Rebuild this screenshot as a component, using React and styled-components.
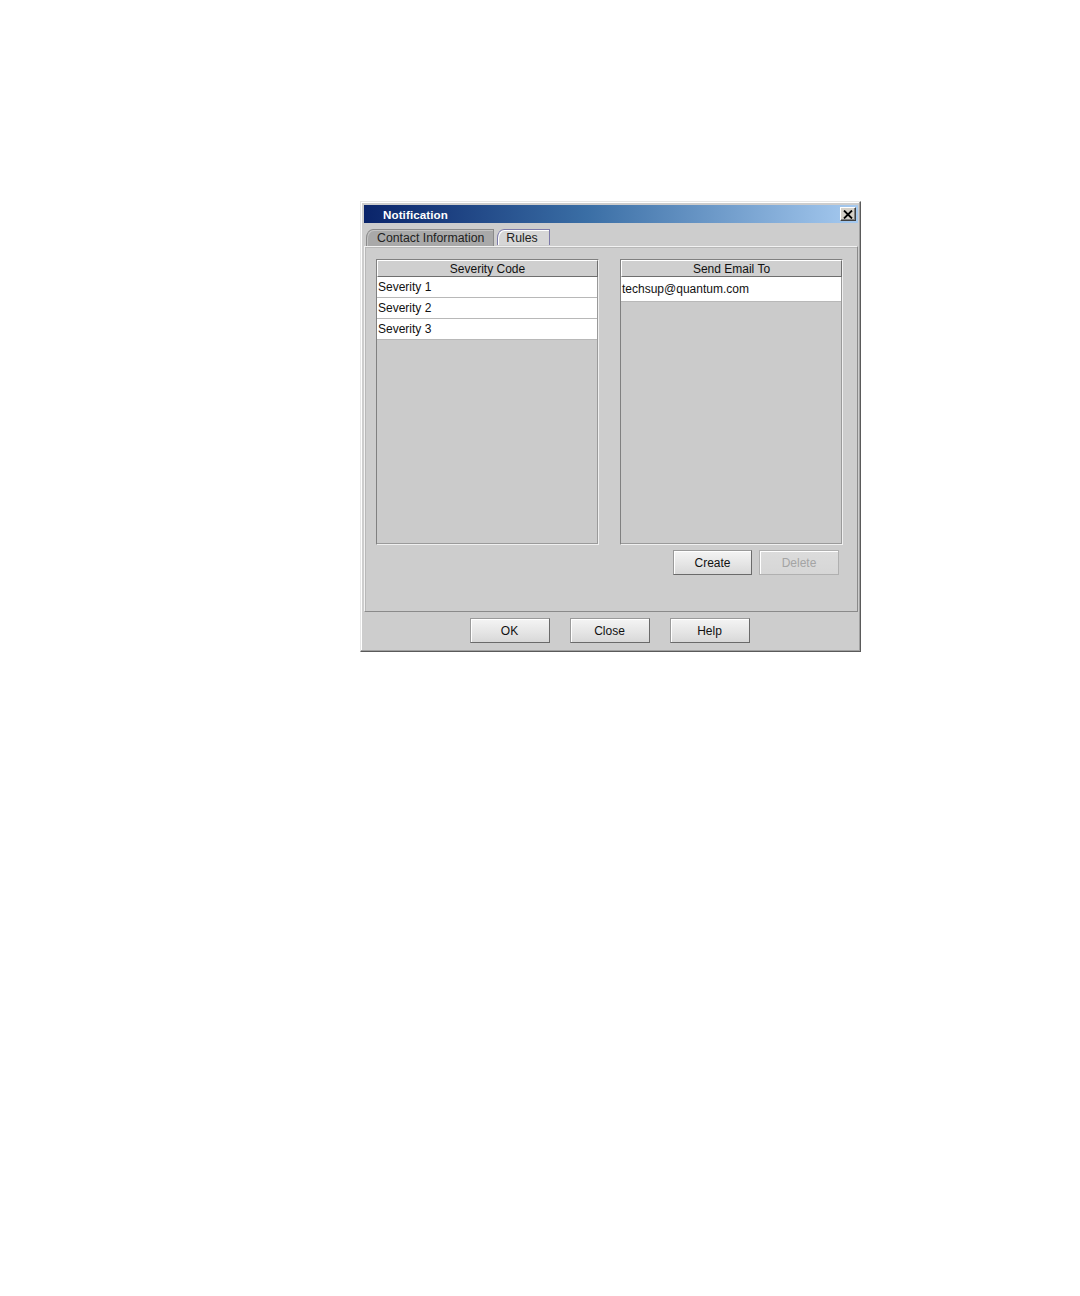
import styled, { createGlobalStyle } from "styled-components";

const GlobalStyle = createGlobalStyle`
  html, body {
    margin: 0;
    background: #ffffff;
  }
  body {
    font-family: "Liberation Sans", Arial, sans-serif;
    font-size: 12px;
    color: #000;
  }
`;

const Page = styled.div`
  width: 1080px;
  height: 1296px;
  padding: 201px 0 0 360px;
  box-sizing: border-box;
`;

const Window = styled.div`
  width: 501px;
  height: 451px;
  box-sizing: border-box;
  background: #cdcdcd;
  border: 1px solid;
  border-color: #e6e6e6 #5a5a5a #5a5a5a #e6e6e6;
  box-shadow: inset -1px -1px 0 #a0a0a0, inset 1px 1px 0 #ffffff;
  padding: 3px 2px 0 3px;
  display: flex;
  flex-direction: column;
`;

const TitleBar = styled.div`
  height: 18px;
  display: flex;
  align-items: center;
  justify-content: space-between;
  padding: 0 2px 0 19px;
  background: linear-gradient(to right, #0a246a 0%, #3a6ea5 45%, #a6caf0 100%);
`;

const Title = styled.span`
  color: #ffffff;
  font-weight: bold;
  font-size: 11.6px;
  letter-spacing: 0.1px;
`;

const CloseBox = styled.button`
  width: 16px;
  height: 14px;
  padding: 0;
  display: flex;
  align-items: center;
  justify-content: center;
  background: #d4d0c8;
  border: 1px solid;
  border-color: #ffffff #404040 #404040 #ffffff;
  box-shadow: inset -1px -1px 0 #808080;
`;

const TabStrip = styled.div`
  display: flex;
  align-items: flex-end;
  gap: 3px;
  height: 23px;
  padding-left: 2px;
`;

const Tab = styled.div`
  height: ${(p) => (p.selected ? "16px" : "17px")};
  box-sizing: border-box;
  padding: 0 ${(p) => (p.selected ? "11px" : "9px")} 0 ${(p) => (p.selected ? "8px" : "10px")};
  margin-bottom: ${(p) => (p.selected ? "1px" : "0")};
  display: flex;
  align-items: center;
  font-size: 12.3px;
  color: #222;
  background: ${(p) => (p.selected ? "#d6d6d6" : "#a9a9a9")};
  border: 1px solid ${(p) => (p.selected ? "#7c7aa8" : "#8a8a8a")};
  border-bottom: none;
  border-top-left-radius: 7px 9px;
  box-shadow: inset 1px 1px 0 ${(p) => (p.selected ? "#ffffff" : "#c4c4c4")};
`;

const Panel = styled.div`
  width: 494px;
  height: 366px;
  box-sizing: border-box;
  border: 1px solid;
  border-color: #f2f2f2 #8a8a8a #8a8a8a #f2f2f2;
  box-shadow: inset 1px 1px 0 #b8b8b8;
  padding: 12px 14px 0 11px;
  display: flex;
  flex-direction: column;
`;

const Tables = styled.div`
  display: flex;
  gap: 21px;
`;

const Table = styled.div`
  width: 223px;
  height: 286px;
  box-sizing: border-box;
  border: 1px solid;
  border-color: #808080 #f0f0f0 #f0f0f0 #808080;
  box-shadow: inset -1px -1px 0 #9a9a9a;
  background: #cbcbcb;
  display: flex;
  flex-direction: column;
`;

const HeaderCell = styled.div`
  height: 17px;
  box-sizing: border-box;
  background: #cfcfcf;
  border: 1px solid;
  border-color: #ffffff #6e6e6e #6e6e6e #ffffff;
  text-align: center;
  line-height: 17px;
  font-size: 12px;
  color: #111;
`;

const Row = styled.div`
  height: ${(p) => p.h}px;
  box-sizing: border-box;
  background: #ffffff;
  border-bottom: 1px solid #b8b8b8;
  margin-right: 1px;
  padding-left: 1px;
  display: flex;
  align-items: center;
  font-size: 12px;
  color: #111;
`;

const ActionRow = styled.div`
  display: flex;
  justify-content: flex-end;
  gap: 7px;
  padding: 5px 4px 0 0;
`;

const Button = styled.button`
  width: ${(p) => p.w || 79}px;
  height: 25px;
  padding: 0;
  box-sizing: border-box;
  font-family: "Liberation Sans", Arial, sans-serif;
  font-size: 12px;
  color: ${(p) => (p.disabled ? "#a4a4a4" : "#111")};
  background: linear-gradient(to bottom, #f4f4f4 0%, #e4e4e4 60%, #d8d8d8 100%);
  border: 1px solid;
  border-color: #9a9a9a #6a6a6a #6a6a6a #9a9a9a;
  box-shadow: inset 1px 1px 0 #ffffff;
  ${(p) =>
    p.disabled &&
    `
    background: linear-gradient(to bottom, #dcdcdc 0%, #d6d6d6 100%);
    border-color: #b0b0b0;
  `}
`;

const Footer = styled.div`
  display: flex;
  justify-content: center;
  gap: 20px;
  padding: 6px 3px 0 0;
`;

const severities = ["Severity 1", "Severity 2", "Severity 3"];

export default function App() {
  return (
    <Page>
      <GlobalStyle />
      <Window>
        <TitleBar>
          <Title>Notification</Title>
          <CloseBox aria-label="close">
            <svg width="10" height="9" viewBox="0 0 10 9">
              <path d="M1 0.5 L9 8.5 M9 0.5 L1 8.5" stroke="#000" strokeWidth="1.8" />
            </svg>
          </CloseBox>
        </TitleBar>
        <TabStrip>
          <Tab>Contact Information</Tab>
          <Tab selected>Rules</Tab>
        </TabStrip>
        <Panel>
          <Tables>
            <Table>
              <HeaderCell>Severity Code</HeaderCell>
              {severities.map((s) => (
                <Row key={s} h={21}>
                  {s}
                </Row>
              ))}
            </Table>
            <Table>
              <HeaderCell>Send Email To</HeaderCell>
              <Row h={25}>techsup@quantum.com</Row>
            </Table>
          </Tables>
          <ActionRow>
            <Button>Create</Button>
            <Button disabled w={80}>
              Delete
            </Button>
          </ActionRow>
        </Panel>
        <Footer>
          <Button w={80}>OK</Button>
          <Button w={80}>Close</Button>
          <Button w={80}>Help</Button>
        </Footer>
      </Window>
    </Page>
  );
}
